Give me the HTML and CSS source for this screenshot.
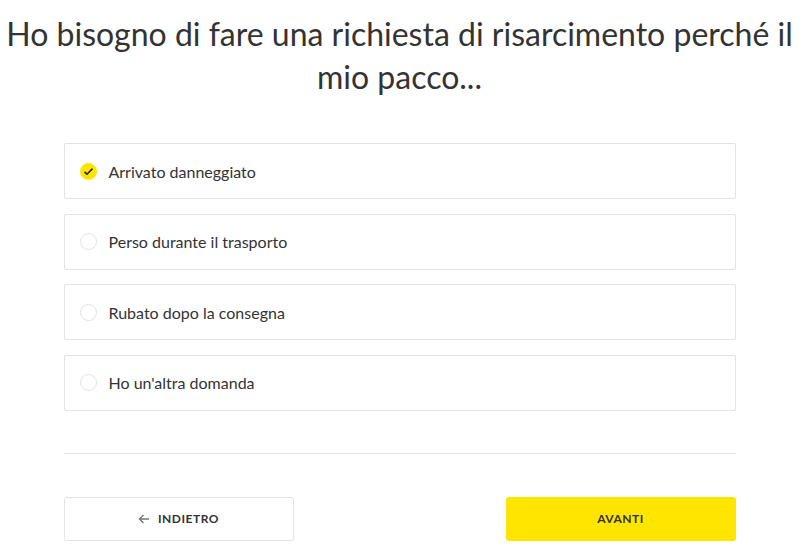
FILE: index.html
```html
<!DOCTYPE html>
<html lang="it">

<head>
    <meta charset="UTF-8">
    <meta name="viewport" content="width=device-width, initial-scale=1.0">
    <title>Richiesta di risarcimento</title>
    <link rel="stylesheet" href="styles.css">
</head>

<body>
    <h1 class="title">Ho bisogno di fare una richiesta di risarcimento perché il mio pacco...</h1>

    <div class="container">
        <div class="options">
            <label class="option checked">
                <span class="radio">
                    <svg width="11" height="9" viewBox="0 0 11 9"><path d="M1.5 4.8 L4 7.2 L9.5 1.6" fill="none" stroke="#222" stroke-width="1.6"/></svg>
                </span>
                <span class="option-text">Arrivato danneggiato</span>
            </label>
            <label class="option">
                <span class="radio"></span>
                <span class="option-text">Perso durante il trasporto</span>
            </label>
            <label class="option">
                <span class="radio"></span>
                <span class="option-text">Rubato dopo la consegna</span>
            </label>
            <label class="option">
                <span class="radio"></span>
                <span class="option-text">Ho un'altra domanda</span>
            </label>
        </div>

        <hr class="divider">

        <div class="actions">
            <button type="button" class="button secondary">
                <svg width="12" height="10" viewBox="0 0 12 10"><path d="M11 5 H1.5 M5.5 1 L1.5 5 L5.5 9" fill="none" stroke="#777" stroke-width="1.4"/></svg>
                Indietro
            </button>
            <button type="button" class="button primary">Avanti</button>
        </div>
    </div>
</body>

</html>
```

FILE: styles.css
```css
body {
    margin: 0;
    font-family: Lato, "Noto Sans", sans-serif;
    color: #333;
    background-color: #fff;
}

.title {
    margin: 12px 0 0;
    padding: 0 6px;
    font-size: 32px;
    font-weight: 400;
    line-height: 43px;
    text-align: center;
    color: #333;
}

.container {
    width: 672px;
    margin: 0 auto;
    padding-top: 45px;
}

.options {
    display: flex;
    flex-direction: column;
    gap: 14.5px;
}

.option {
    display: flex;
    align-items: center;
    height: 56px;
    padding: 0 15px;
    border: 1px solid #e3e3e6;
    border-radius: 2px;
    box-sizing: border-box;
    cursor: pointer;
}

.radio {
    display: flex;
    align-items: center;
    justify-content: center;
    width: 17px;
    height: 17px;
    margin-right: 12px;
    border: 1px solid #e3e3e6;
    border-radius: 50%;
    box-sizing: border-box;
}

.option.checked .radio {
    background-color: #ffe500;
    border-color: #ffe500;
}

.option-text {
    font-size: 16px;
    color: #333;
}

.divider {
    margin: 42px 0 0;
    border: none;
    border-top: 1px solid #e3e3e6;
}

.actions {
    display: flex;
    justify-content: space-between;
    padding-top: 43px;
}

.button {
    display: flex;
    align-items: center;
    justify-content: center;
    gap: 8px;
    width: 230px;
    height: 44px;
    border-radius: 3px;
    font-family: inherit;
    font-size: 12px;
    font-weight: 700;
    letter-spacing: 0.5px;
    text-transform: uppercase;
    color: #333;
    cursor: pointer;
}

.button.secondary {
    background-color: #fff;
    border: 1px solid #e3e3e6;
}

.button.primary {
    background-color: #ffe500;
    border: none;
}
```
